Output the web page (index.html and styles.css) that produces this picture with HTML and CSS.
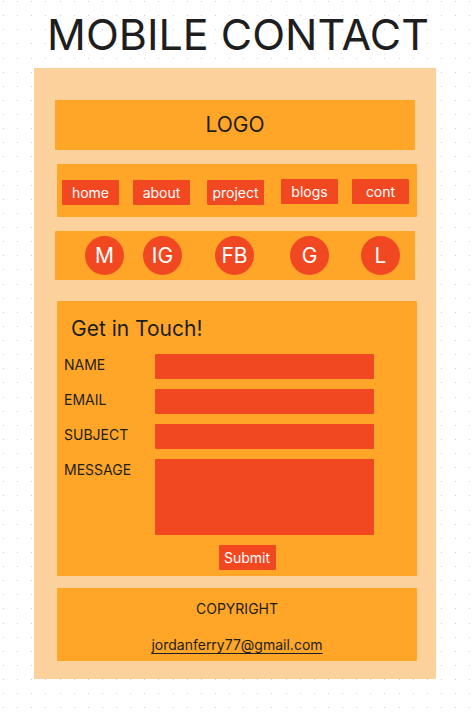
FILE: index.html
```html
<!DOCTYPE html>
<html lang="en">
<head>
<meta charset="utf-8">
<meta name="viewport" content="width=device-width, initial-scale=1">
<title>Mobile Contact</title>
<link rel="stylesheet" href="styles.css">
</head>
<body>
<svg class="dots" aria-hidden="true">
  <defs>
    <pattern id="dot-grid" x="3" y="1" width="113" height="113" patternUnits="userSpaceOnUse">
      <path d="M0 .5H113M0 14.5H113M0 28.5H113M0 42.5H113M0 57.5H113M0 71.5H113M0 85.5H113M0 99.5H113" stroke="#d0d0d0" stroke-width="1" stroke-dasharray="1 13 1 13 1 13 1 14 1 13 1 13 1 13 1 14"/>
    </pattern>
  </defs>
  <rect width="100%" height="100%" fill="url(#dot-grid)"/>
</svg>
<h1 class="title">MOBILE CONTACT</h1>
<main class="card">
  <header class="panel logo">LOGO</header>
  <nav class="panel panel-inset nav">
    <a class="button" href="#home">home</a>
    <a class="button" href="#about">about</a>
    <a class="button" href="#project">project</a>
    <a class="button button-raised" href="#blogs">blogs</a>
    <a class="button button-raised" href="#cont">cont</a>
  </nav>
  <div class="panel social">
    <a class="circle" href="#m">M</a>
    <a class="circle" href="#ig">IG</a>
    <a class="circle" href="#fb">FB</a>
    <a class="circle" href="#g">G</a>
    <a class="circle" href="#l">L</a>
  </div>
  <form class="panel panel-inset form">
    <h2 class="heading">Get in Touch!</h2>
    <div class="row">
      <label for="name">NAME</label>
      <input class="field" id="name" type="text">
    </div>
    <div class="row">
      <label for="email">EMAIL</label>
      <input class="field" id="email" type="email">
    </div>
    <div class="row">
      <label for="subject">SUBJECT</label>
      <input class="field" id="subject" type="text">
    </div>
    <div class="row">
      <label for="message">MESSAGE</label>
      <textarea class="field field-tall" id="message"></textarea>
    </div>
    <button class="button submit" type="submit">Submit</button>
  </form>
  <footer class="panel panel-inset footer">
    <p>COPYRIGHT</p>
    <a class="mail" href="mailto:jordanferry77@gmail.com">jordanferry77@gmail.com</a>
  </footer>
</main>
</body>
</html>
```
FILE: styles.css
```css
* {
  box-sizing: border-box;
}

body {
  margin: 0;
  background: #fff;
  color: #1e1e1e;
  font: 14px/20px Inter, "Liberation Sans", sans-serif;
}

.dots {
  position: absolute;
  inset: 0;
  z-index: -1;
  width: 100%;
  height: 100%;
}

.title {
  margin: 0;
  padding: 6px 0 6px;
  font-size: 43px;
  font-weight: 400;
  line-height: 56px;
  text-align: center;
  white-space: nowrap;
}

.card {
  margin: 0 40px 39px 34px;
  padding: 32px 21px 18px;
  background: #fcd19c;
}

.panel {
  border-radius: 1px;
  background: #ffa629;
}

.panel-inset {
  margin-right: -2px;
  margin-left: 2px;
}

.logo {
  padding: 10px 0;
  font-size: 21px;
  line-height: 30px;
  text-align: center;
}

.nav {
  display: grid;
  grid-template-columns: 71fr 74fr 74fr 71fr 57fr;
  align-items: start;
  margin-top: 14px;
  padding: 15px 8px 12px 5px;
}

.button {
  width: 57px;
  margin-top: 1px;
  padding: 0;
  border: 0;
  border-radius: 1px;
  background: #f24822;
  color: #fff;
  font: inherit;
  line-height: 25px;
  text-align: center;
  text-decoration: none;
}

.button-raised {
  margin-top: 0;
}

.social {
  display: grid;
  grid-template-columns: 58fr 72fr 75fr 71fr 39fr;
  margin-top: 14px;
  padding: 5px 15px 5px 30px;
}

.circle {
  width: 39px;
  border-radius: 50%;
  background: #f24822;
  color: #fff;
  font-size: 21px;
  line-height: 39px;
  text-align: center;
  text-decoration: none;
}

.form {
  display: flex;
  flex-direction: column;
  gap: 10px;
  margin-top: 21px;
  padding: 13px 43px 6px 7px;
}

.heading {
  margin: 0;
  padding-left: 7px;
  font-size: 21px;
  font-weight: 400;
  line-height: 30px;
}

.row {
  display: grid;
  grid-template-columns: 91fr 219fr;
  align-items: start;
}

.row label {
  padding-top: 1px;
}

.field {
  width: 100%;
  height: 25px;
  padding: 0 6px;
  border: 0;
  border-radius: 1px;
  background: #f24822;
  color: #fff;
  font: inherit;
  resize: none;
}

.field-tall {
  display: block;
  height: 76px;
}

.submit {
  align-self: center;
  margin: 0 0 0 56px;
}

.footer {
  margin-top: 12px;
  padding: 11px 0 6px;
  text-align: center;
}

.footer p {
  margin: 0 0 16px;
}

.mail {
  color: inherit;
  text-underline-position: under;
}
```
